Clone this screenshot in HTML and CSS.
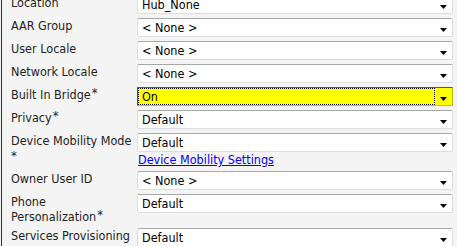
FILE: index.html
```html
<!DOCTYPE html>
<html lang="en">
<head>
    <meta charset="UTF-8">
    <meta name="viewport" content="width=device-width, initial-scale=1.0">
    <title>Phone Configuration</title>
    <link rel="stylesheet" href="styles.css">
</head>
<body>
    <div class="panel">
        <div class="grid">
            <div class="label">Location</div>
            <div class="field"><div class="select"><span class="value">Hub_None</span><span class="arrow"><svg width="7" height="4" viewBox="0 0 7 4"><polygon points="0,0 7,0 3.5,4" fill="#000"/></svg></span></div></div>

            <div class="label">AAR Group</div>
            <div class="field"><div class="select"><span class="value">&lt; None &gt;</span><span class="arrow"><svg width="7" height="4" viewBox="0 0 7 4"><polygon points="0,0 7,0 3.5,4" fill="#000"/></svg></span></div></div>

            <div class="label">User Locale</div>
            <div class="field"><div class="select"><span class="value">&lt; None &gt;</span><span class="arrow"><svg width="7" height="4" viewBox="0 0 7 4"><polygon points="0,0 7,0 3.5,4" fill="#000"/></svg></span></div></div>

            <div class="label">Network Locale</div>
            <div class="field"><div class="select"><span class="value">&lt; None &gt;</span><span class="arrow"><svg width="7" height="4" viewBox="0 0 7 4"><polygon points="0,0 7,0 3.5,4" fill="#000"/></svg></span></div></div>

            <div class="label">Built In Bridge<span class="req">*</span></div>
            <div class="field"><div class="select focused"><span class="value">On</span><span class="arrow"><svg width="7" height="4" viewBox="0 0 7 4"><polygon points="0,0 7,0 3.5,4" fill="#000"/></svg></span></div></div>

            <div class="label">Privacy<span class="req">*</span></div>
            <div class="field"><div class="select"><span class="value">Default</span><span class="arrow"><svg width="7" height="4" viewBox="0 0 7 4"><polygon points="0,0 7,0 3.5,4" fill="#000"/></svg></span></div></div>

            <div class="label">Device Mobility Mode<br><span class="req wrapped">*</span></div>
            <div class="field">
                <div class="select"><span class="value">Default</span><span class="arrow"><svg width="7" height="4" viewBox="0 0 7 4"><polygon points="0,0 7,0 3.5,4" fill="#000"/></svg></span></div>
                <a href="#" class="link">Device Mobility Settings</a>
            </div>

            <div class="label">Owner User ID</div>
            <div class="field"><div class="select"><span class="value">&lt; None &gt;</span><span class="arrow"><svg width="7" height="4" viewBox="0 0 7 4"><polygon points="0,0 7,0 3.5,4" fill="#000"/></svg></span></div></div>

            <div class="label">Phone<br>Personalization<span class="req">*</span></div>
            <div class="field"><div class="select"><span class="value">Default</span><span class="arrow"><svg width="7" height="4" viewBox="0 0 7 4"><polygon points="0,0 7,0 3.5,4" fill="#000"/></svg></span></div></div>

            <div class="label">Services Provisioning<br><span class="req wrapped">*</span></div>
            <div class="field"><div class="select"><span class="value">Default</span><span class="arrow"><svg width="7" height="4" viewBox="0 0 7 4"><polygon points="0,0 7,0 3.5,4" fill="#000"/></svg></span></div></div>
        </div>
    </div>
</body>
</html>
```

FILE: styles.css
```css
body {
    margin: 0;
    background-color: #f4f4f4;
    font-family: "DejaVu Sans", Verdana, sans-serif;
    font-stretch: condensed;
    font-size: 12.5px;
    line-height: 15px;
    color: #222;
    overflow: hidden;
}

.panel {
    margin: -5px 0 0 1px;
    padding-left: 9px;
    border-left: 1px solid #333;
    min-height: 260px;
}

.grid {
    display: grid;
    grid-template-columns: 126px 316px;
    row-gap: 4px;
}

.label {
    white-space: nowrap;
}

.req {
    font-size: 13px;
    position: relative;
    top: -2px;
    margin-left: 1px;
}

.req.wrapped {
    top: 0;
    margin-left: 0;
}

.select {
    display: flex;
    height: 17px;
    background-color: #fff;
    border: 1px solid #dadde2;
    border-top-color: #a8a8a8;
    border-radius: 2px;
    color: #000;
}

.select .value {
    flex: 1;
    padding-left: 4px;
    line-height: 17px;
}

.select .arrow {
    width: 17px;
    display: flex;
    align-items: center;
    justify-content: center;
}

.select .arrow svg {
    margin-top: 4px;
}

.select.focused {
    background-color: #ffff00;
    border-color: #5a5a40 #a8b820 #c8c800 #505040;
    border-radius: 0;
}

.select.focused .value {
    border: 1px dotted #000;
    padding-left: 3px;
    line-height: 15px;
}

.link {
    display: block;
    margin-left: 1px;
    color: #0000ff;
    text-decoration: underline;
}
```
